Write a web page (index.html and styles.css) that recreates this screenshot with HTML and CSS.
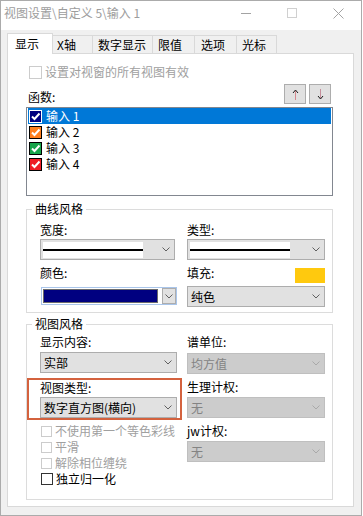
FILE: index.html
```html
<!DOCTYPE html>
<html>
<head>
  <meta charset="utf-8">
  <title>视图设置</title>
  <link rel="stylesheet" href="styles.css">
</head>
<body>
  <div class="window">

    <div class="titlebar">
      <div class="title">视图设置\自定义 5\输入 1</div>
      <div class="caption-btn">
        <svg width="10" height="10"><line x1="0" y1="5.5" x2="10" y2="5.5" stroke="#a3a3a3"/></svg>
      </div>
      <div class="caption-btn">
        <svg width="10" height="10"><rect x="0.5" y="0.5" width="9" height="9" fill="none" stroke="#d0d0d0"/></svg>
      </div>
      <div class="caption-btn">
        <svg width="11" height="11"><path d="M0.5 0.5 L10.5 10.5 M10.5 0.5 L0.5 10.5" stroke="#a3a3a3"/></svg>
      </div>
    </div>

    <div class="client">
      <div class="tabs">
        <div class="tab active tab-show">显示</div>
        <div class="tab tab-x">X轴</div>
        <div class="tab tab-digit">数字显示</div>
        <div class="tab tab-limit">限值</div>
        <div class="tab tab-opt">选项</div>
        <div class="tab tab-cursor">光标</div>
      </div>

      <div class="panel">
        <div class="check check-top disabled"><span class="box"></span>设置对视窗的所有视图有效</div>

        <div class="func-row">
          <span class="func-label">函数:</span>
          <div class="move-btns">
            <div class="move-btn">
              <svg width="7" height="11"><line x1="3.5" y1="2" x2="3.5" y2="11" stroke="#d48a8f"/><path d="M1 4 L3.5 1 L6 4" fill="none" stroke="#1a1a1a"/></svg>
            </div>
            <div class="move-btn">
              <svg width="7" height="11"><line x1="3.5" y1="0" x2="3.5" y2="9" stroke="#c58d9a"/><path d="M1 7 L3.5 10 L6 7" fill="none" stroke="#1a1a1a"/></svg>
            </div>
          </div>
        </div>

        <div class="func-list">
          <div class="func-item selected">
            <span class="mark mark-navy"><svg width="11" height="11"><polyline points="2,5.5 4.5,8 9.5,2.5" fill="none" stroke="#fff" stroke-width="2"/></svg></span>输入 1
          </div>
          <div class="func-item">
            <span class="mark mark-orange"><svg width="11" height="11"><polyline points="2,5.5 4.5,8 9.5,2.5" fill="none" stroke="#fff" stroke-width="2"/></svg></span>输入 2
          </div>
          <div class="func-item">
            <span class="mark mark-green"><svg width="11" height="11"><polyline points="2,5.5 4.5,8 9.5,2.5" fill="none" stroke="#fff" stroke-width="2"/></svg></span>输入 3
          </div>
          <div class="func-item">
            <span class="mark mark-red"><svg width="11" height="11"><polyline points="2,5.5 4.5,8 9.5,2.5" fill="none" stroke="#fff" stroke-width="2"/></svg></span>输入 4
          </div>
        </div>

        <!-- 曲线风格 -->
        <fieldset class="group group-curve">
          <legend>曲线风格</legend>
          <div class="cols">
            <div class="col col-left">
              <div class="lbl">宽度:</div>
              <div class="combo combo-line combo-narrow">
                <span class="line-box"><span class="line"></span></span>
                <svg class="chev" width="8" height="5"><polyline points="0.5,0.5 4,4 7.5,0.5" fill="none" stroke="#606060"/></svg>
              </div>
              <div class="lbl lbl-gap">颜色:</div>
              <div class="color-combo">
                <span class="color-box"></span>
                <span class="drop-btn"><svg width="8" height="5"><polyline points="0.5,0.5 4,4 7.5,0.5" fill="none" stroke="#606060"/></svg></span>
              </div>
            </div>
            <div class="col col-right">
              <div class="lbl">类型:</div>
              <div class="combo combo-line">
                <span class="line-box"><span class="line"></span></span>
                <svg class="chev" width="8" height="5"><polyline points="0.5,0.5 4,4 7.5,0.5" fill="none" stroke="#606060"/></svg>
              </div>
              <div class="fill-row lbl-gap">
                <span class="lbl">填充:</span>
                <span class="fill-swatch"></span>
              </div>
              <div class="combo combo-fill">
                <span>纯色</span>
                <svg class="chev" width="8" height="5"><polyline points="0.5,0.5 4,4 7.5,0.5" fill="none" stroke="#606060"/></svg>
              </div>
            </div>
          </div>
        </fieldset>

        <!-- 视图风格 -->
        <fieldset class="group group-view">
          <legend>视图风格</legend>
          <div class="cols">
            <div class="col col-left">
              <div class="lbl">显示内容:</div>
              <div class="combo">
                <span>实部</span>
                <svg class="chev" width="8" height="5"><polyline points="0.5,0.5 4,4 7.5,0.5" fill="none" stroke="#606060"/></svg>
              </div>
              <div class="highlight">
                <div class="lbl">视图类型:</div>
                <div class="combo combo-tight">
                  <span>数字直方图(横向)</span>
                  <svg class="chev" width="8" height="5"><polyline points="0.5,0.5 4,4 7.5,0.5" fill="none" stroke="#606060"/></svg>
                </div>
              </div>
              <div class="checks">
                <div class="check disabled"><span class="box"></span>不使用第一个等色彩线</div>
                <div class="check disabled"><span class="box"></span>平滑</div>
                <div class="check disabled"><span class="box"></span>解除相位缠绕</div>
                <div class="check"><span class="box"></span>独立归一化</div>
              </div>
            </div>
            <div class="col col-right">
              <div class="lbl">谱单位:</div>
              <div class="combo disabled combo-first">
                <span>均方值</span>
                <svg class="chev" width="8" height="5"><polyline points="0.5,0.5 4,4 7.5,0.5" fill="none" stroke="#a9a9a9"/></svg>
              </div>
              <div class="lbl lbl-gap">生理计权:</div>
              <div class="combo disabled">
                <span>无</span>
                <svg class="chev" width="8" height="5"><polyline points="0.5,0.5 4,4 7.5,0.5" fill="none" stroke="#a9a9a9"/></svg>
              </div>
              <div class="lbl lbl-gap">jw计权:</div>
              <div class="combo disabled">
                <span>无</span>
                <svg class="chev" width="8" height="5"><polyline points="0.5,0.5 4,4 7.5,0.5" fill="none" stroke="#a9a9a9"/></svg>
              </div>
            </div>
          </div>
        </fieldset>
      </div>
    </div>

  </div>
</body>
</html>
```

FILE: styles.css
```css
body {
  margin: 0;
  background: #fff;
  font-family: "Noto Sans CJK SC", "Noto Sans", sans-serif;
  font-size: 12px;
  color: #000;
}

.window {
  width: 362px;
  height: 516px;
  box-sizing: border-box;
  border: 1px solid #ababab;
  display: flex;
  flex-direction: column;
}

/* title bar (inactive) */
.titlebar {
  height: 29px;
  flex: none;
  display: flex;
  align-items: flex-start;
  background: #fff;
}

.title {
  flex: 1;
  padding-left: 3px;
  line-height: 24px;
  color: #9d9d9d;
  white-space: nowrap;
}

.caption-btn {
  width: 46px;
  height: 24px;
  display: flex;
  align-items: center;
  justify-content: center;
}

.client {
  flex: 1;
  background: #f0f0f0;
  padding: 3px 0 0 6px;
}

/* tabs */
.tabs {
  display: flex;
  align-items: flex-end;
  height: 20px;
}

.tab {
  box-sizing: border-box;
  height: 18px;
  line-height: 17px;
  padding-left: 5px;
  border-top: 1px solid #d9d9d9;
  border-right: 1px solid #d9d9d9;
  background: #f0f0f0;
  white-space: nowrap;
}

.tab.active {
  height: 21px;
  line-height: 19px;
  margin-bottom: -1px;
  padding-left: 7px;
  border-left: 1px solid #d9d9d9;
  background: #fff;
  position: relative;
  z-index: 1;
}

.tab-show { width: 46px; }
.tab-x { width: 40px; padding-left: 4px; }
.tab-digit { width: 60px; }
.tab-limit { width: 42px; }
.tab-opt { width: 42px; padding-left: 6px; }
.tab-cursor { width: 40px; }

.panel {
  width: 347px;
  height: 454px;
  box-sizing: border-box;
  border: 1px solid #d9d9d9;
  background: #fff;
  padding: 10px 20px 0 18px;
}

/* checkboxes */
.check {
  display: flex;
  align-items: center;
  height: 16px;
  line-height: 16px;
  white-space: nowrap;
}

.check .box {
  width: 12px;
  height: 12px;
  box-sizing: border-box;
  border: 1px solid #333;
  margin: 0 3px 0 1px;
  background: #fff;
}

.check.disabled {
  color: #a0a0a0;
}

.check.disabled .box {
  width: 11px;
  height: 11px;
  border-color: #cccccc;
}

.check-top .box,
.check-top.disabled .box {
  width: 13px;
  height: 13px;
  margin-left: 3px;
}

/* function list */
.func-row {
  display: flex;
  justify-content: space-between;
  height: 21px;
  margin-top: 4px;
}

.func-label {
  margin: 5px 0 0 2px;
  line-height: 16px;
}

.move-btns {
  display: flex;
  gap: 3px;
  margin-right: 2px;
}

.move-btn {
  width: 22px;
  height: 20px;
  box-sizing: border-box;
  border: 1px solid #adadad;
  background: #e1e1e1;
  display: flex;
  align-items: center;
  justify-content: center;
}

.func-list {
  width: 307px;
  height: 89px;
  box-sizing: border-box;
  border: 1px solid #828790;
  padding: 0 1px;
  margin-top: 2px;
}

.func-item {
  height: 16px;
  line-height: 16px;
  display: flex;
  align-items: center;
}

.func-item.selected {
  background: #0078d7;
  color: #fff;
}

.mark {
  width: 13px;
  height: 13px;
  box-sizing: border-box;
  border: 1px solid #000;
  margin: 0 4px 0 1px;
  display: flex;
}

.func-item.selected .mark {
  border-color: #fff;
}

.mark-navy { background: #000080; }
.mark-orange { background: #ff7f1e; }
.mark-green { background: #17a44a; }
.mark-red { background: #ee1c24; }

/* group boxes */
.group {
  width: 307px;
  box-sizing: border-box;
  margin: 0;
  border: 1px solid #dcdcdc;
  padding: 5px 7px 5px 13px;
  min-width: 0;
}

.group legend {
  line-height: 16px;
  padding: 0 3px;
  margin-left: -8px;
}

.group-curve {
  margin-top: 5px;
}

.group-view {
  margin-top: 3px;
  padding-top: 2px;
  padding-bottom: 12px;
}

.cols {
  display: flex;
  gap: 10px;
  align-items: flex-start;
}

.col-left { width: 137px; }
.col-right { width: 138px; }

.lbl {
  height: 16px;
  line-height: 16px;
  white-space: nowrap;
}

.lbl-gap {
  margin-top: 5px;
}

/* combo boxes */
.combo {
  height: 21px;
  box-sizing: border-box;
  border: 1px solid #adadad;
  background: #e1e1e1;
  margin-top: 2px;
  padding: 0 4px 0 3px;
  display: flex;
  align-items: center;
  justify-content: space-between;
  line-height: 16px;
  white-space: nowrap;
}

.group-curve .combo {
  margin-top: 1px;
}

.group-curve .combo-fill {
  margin-top: 3px;
}

.combo-first {
  margin-top: 3px;
}

.combo-tight {
  margin-top: 1px;
}

.combo.disabled {
  background: #cccccc;
  border-color: #bfbfbf;
  color: #838383;
}

.combo-narrow {
  width: 135px;
}

.combo-line {
  padding-left: 2px;
}

.line-box {
  width: 100px;
  height: 16px;
  background: #fff;
  display: flex;
  align-items: center;
}

.line {
  width: 100%;
  height: 2px;
  background: #000;
}

.color-combo {
  height: 18px;
  box-sizing: border-box;
  margin-top: 6px;
  margin-left: 1px;
  border: 1px solid #a9c5ea;
  background: #fff;
  display: flex;
  align-items: center;
}

.color-box {
  width: 115px;
  height: 14px;
  box-sizing: border-box;
  margin-left: 1px;
  border: 1px solid #6b6b6b;
  background: #000080;
}

.drop-btn {
  width: 14px;
  height: 16px;
  box-sizing: border-box;
  margin-left: auto;
  border: 1px solid #adadad;
  background: #e1e1e1;
  display: flex;
  align-items: center;
  justify-content: center;
}

.fill-row {
  display: flex;
  justify-content: space-between;
  height: 18px;
}

.fill-swatch {
  align-self: flex-end;
  width: 30px;
  height: 15px;
  background: #ffc90e;
}

/* red marker around view type */
.highlight {
  margin: 5px -5px 0 -13px;
  padding: 0 3px 0 11px;
  border: 2px solid #d4623e;
}

.checks {
  margin-top: 3px;
}
```
